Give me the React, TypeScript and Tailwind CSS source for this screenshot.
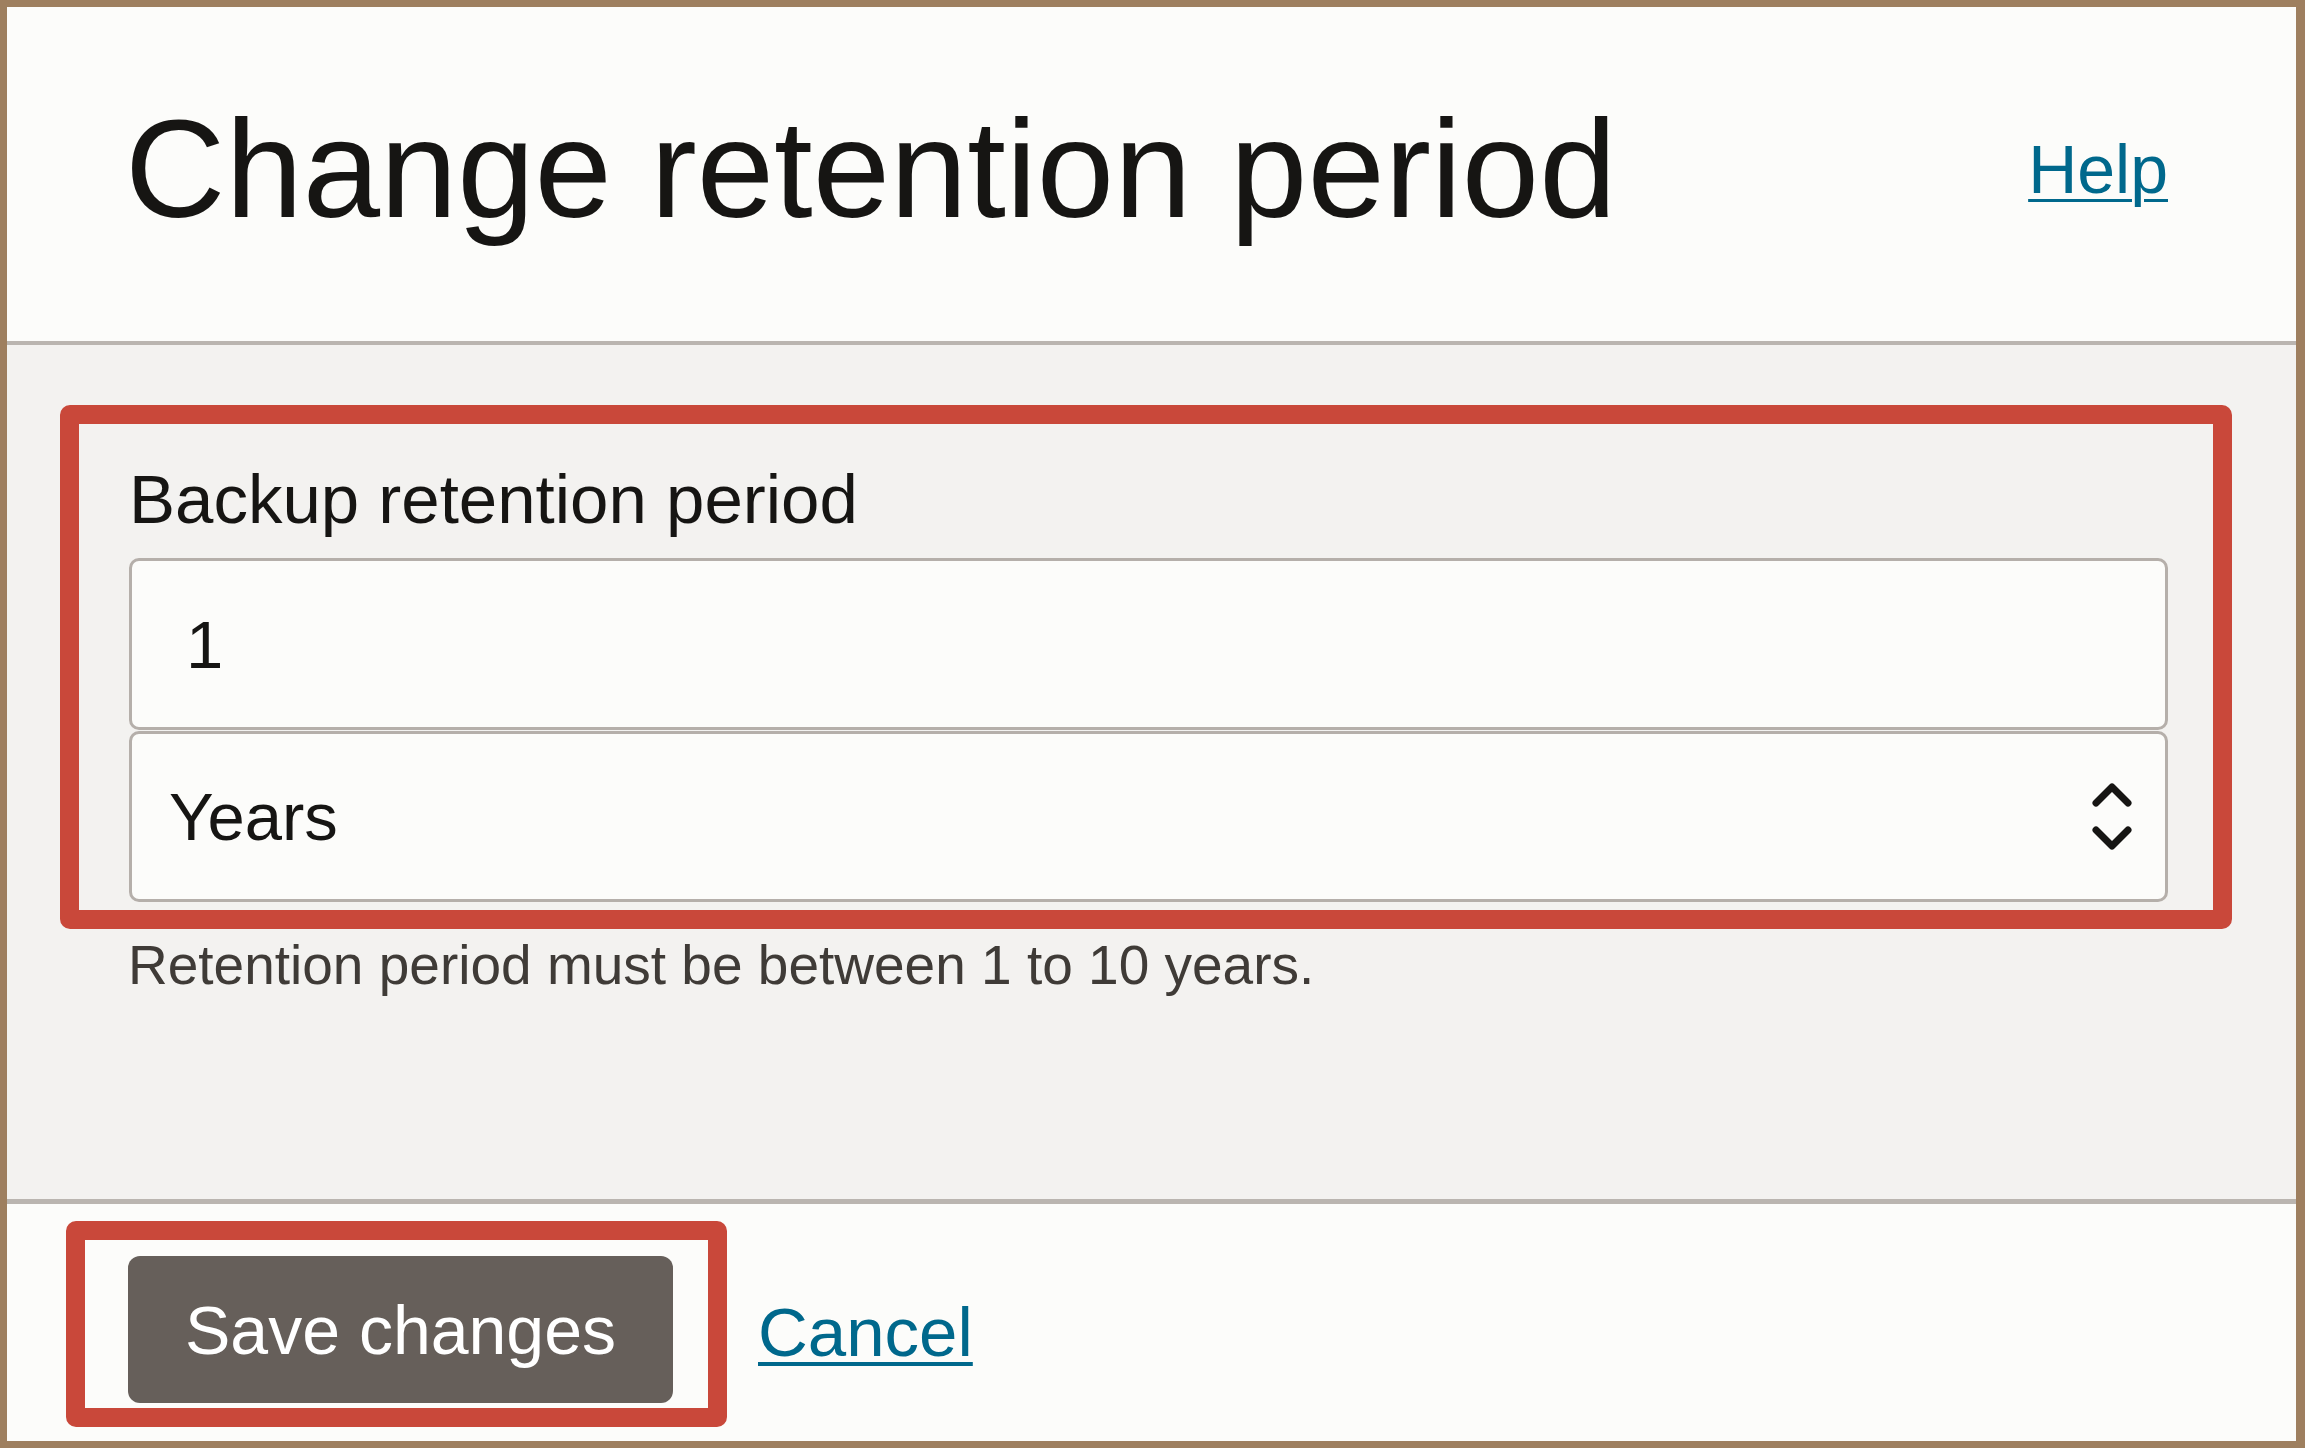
const ChevronUpDown = () => (
  <svg width="42" height="72" viewBox="0 0 42 72" fill="none" stroke="#161513" strokeWidth={7} strokeLinecap="round" strokeLinejoin="round">
    <path d="M5 22 L21 6 L37 22" />
    <path d="M5 49 L21 65 L37 49" />
  </svg>
);

export default function App() {
  return (
    <div className="w-[2305px] h-[1448px] border-[7px] border-r-[9px] border-[#9e7f5f] bg-[#f3f2f0] flex flex-col font-['Liberation_Sans',Arial,sans-serif] text-[#161513]">
      {/* Header */}
      <div className="h-[338px] shrink-0 bg-[#fcfcfa] border-b-4 border-[#bab5b0] flex items-center justify-between pl-[118px] pr-[128px] pb-[11px]">
        <h1 className="text-[139px] leading-none font-normal">Change retention period</h1>
        <a href="#help" className="text-[68px] leading-none text-[#00688c] underline decoration-[3px] underline-offset-[6px]">
          Help
        </a>
      </div>

      {/* Body */}
      <div className="h-[854px] shrink-0 pt-[60px] pl-[53px] pr-[64px]">
        <div className="border-[19px] border-[#c9483a] rounded-[10px] pt-[41px] pl-[50px] pr-[45px] pb-[8px]">
          <label className="block text-[69px] leading-none">Backup retention period</label>
          <input
            readOnly
            value="1"
            className="mt-[24px] block w-full h-[172px] bg-[#fcfcfa] border-[3px] border-[#b5afaa] rounded-[10px] pl-[54px] text-[67px] leading-none outline-none"
          />
          <div className="mt-[1px] h-[171px] bg-[#fcfcfa] border-[3px] border-[#b5afaa] rounded-[10px] pl-[37px] pr-[32px] flex items-center justify-between">
            <span className="text-[67px] leading-none">Years</span>
            <ChevronUpDown />
          </div>
        </div>
        <p className="mt-[9px] ml-[68px] text-[55px] leading-none text-[#3f3b37]">
          Retention period must be between 1 to 10 years.
        </p>
      </div>

      {/* Footer */}
      <div className="flex-1 bg-[#fcfcfa] border-t-[5px] border-[#bab5b0] pt-[17px] pl-[59px]">
        <div className="flex items-center">
          <div className="border-[19px] border-[#c9483a] rounded-[10px] pl-[43px] pr-[35px] pt-[16px] pb-[5px]">
            <button className="w-[545px] h-[147px] rounded-[12px] bg-[#665f5a] text-white text-[68px] leading-none flex items-center justify-center">
              Save changes
            </button>
          </div>
          <a href="#cancel" className="ml-[31px] mt-[16px] text-[69px] leading-none text-[#00688c] underline decoration-[4px] underline-offset-[6px]">
            Cancel
          </a>
        </div>
      </div>
    </div>
  );
}
